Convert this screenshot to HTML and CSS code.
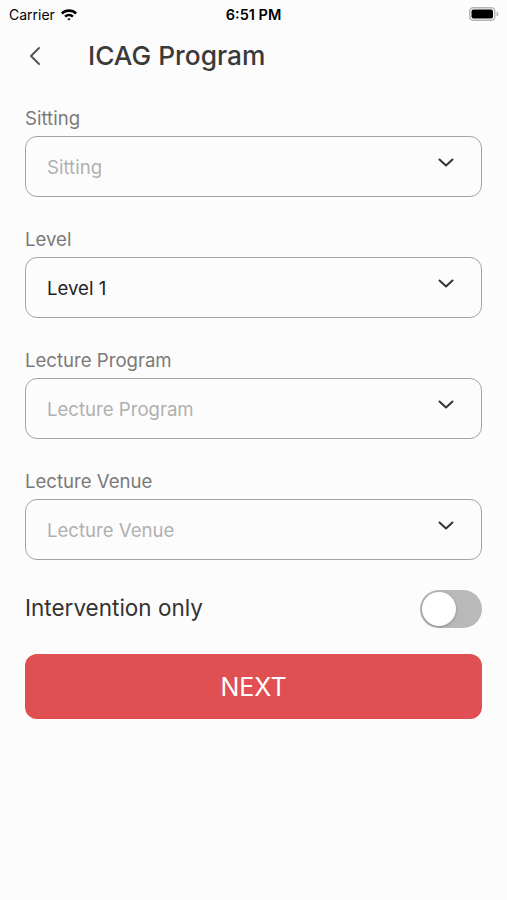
FILE: index.html
```html
<!DOCTYPE html>
<html>
<head>
    <meta charset="UTF-8">
    <title>ICAG Program</title>
    <link rel="stylesheet" href="styles.css">
</head>
<body>
    <div class="statusbar">
        <div class="carrier">Carrier
            <svg class="wifi" width="18" height="13" viewBox="0 0 18 13">
                <path d="M1 4.6 A11.5 11.5 0 0 1 17 4.6 L15.2 6.4 A9 9 0 0 0 2.8 6.4 Z" fill="#000"/>
                <path d="M4.2 7.8 A6.8 6.8 0 0 1 13.8 7.8 L12 9.6 A4.2 4.2 0 0 0 6 9.6 Z" fill="#000"/>
                <path d="M7.4 11 A2.3 2.3 0 0 1 10.6 11 L9 12.6 Z" fill="#000"/>
            </svg>
        </div>
        <div class="time">6:51 PM</div>
        <div class="battery">
            <svg width="30" height="14" viewBox="0 0 30 14">
                <rect x="0.75" y="0.75" width="25" height="12.5" rx="3.5" fill="none" stroke="#b5b5b5" stroke-width="1.5"/>
                <rect x="2.5" y="2.5" width="21.5" height="9" rx="2" fill="#000"/>
                <path d="M27.5 4.5 Q29.5 5 29.5 7 Q29.5 9 27.5 9.5 Z" fill="#b5b5b5"/>
            </svg>
        </div>
    </div>

    <div class="navbar">
        <svg class="back" width="12" height="20" viewBox="0 0 12 20">
            <path d="M10 2 L2 10 L10 18" fill="none" stroke="#555" stroke-width="2" stroke-linecap="round" stroke-linejoin="round"/>
        </svg>
        <div class="title">ICAG Program</div>
    </div>

    <div class="form">
        <div class="field">
            <div class="label">Sitting</div>
            <div class="select">
                <span class="placeholder">Sitting</span>
                <svg class="chevron" width="16" height="9" viewBox="0 0 16 9"><path d="M1.5 1.5 L8 7.5 L14.5 1.5" fill="none" stroke="#333" stroke-width="2" stroke-linecap="round" stroke-linejoin="round"/></svg>
            </div>
        </div>
        <div class="field">
            <div class="label">Level</div>
            <div class="select">
                <span class="value">Level 1</span>
                <svg class="chevron" width="16" height="9" viewBox="0 0 16 9"><path d="M1.5 1.5 L8 7.5 L14.5 1.5" fill="none" stroke="#333" stroke-width="2" stroke-linecap="round" stroke-linejoin="round"/></svg>
            </div>
        </div>
        <div class="field">
            <div class="label">Lecture Program</div>
            <div class="select">
                <span class="placeholder">Lecture Program</span>
                <svg class="chevron" width="16" height="9" viewBox="0 0 16 9"><path d="M1.5 1.5 L8 7.5 L14.5 1.5" fill="none" stroke="#333" stroke-width="2" stroke-linecap="round" stroke-linejoin="round"/></svg>
            </div>
        </div>
        <div class="field">
            <div class="label">Lecture Venue</div>
            <div class="select">
                <span class="placeholder">Lecture Venue</span>
                <svg class="chevron" width="16" height="9" viewBox="0 0 16 9"><path d="M1.5 1.5 L8 7.5 L14.5 1.5" fill="none" stroke="#333" stroke-width="2" stroke-linecap="round" stroke-linejoin="round"/></svg>
            </div>
        </div>

        <div class="switch-row">
            <span class="switch-label">Intervention only</span>
            <div class="switch"><div class="knob"></div></div>
        </div>

        <div class="button">NEXT</div>
    </div>
</body>
</html>
```

FILE: styles.css
```css
body {
    margin: 0;
    background-color: #fcfcfc;
    font-family: Inter, 'Liberation Sans', sans-serif;
    color: #333333;
}

.statusbar {
    height: 28px;
    display: flex;
    align-items: center;
    justify-content: space-between;
    padding: 0 8px 0 9px;
    position: relative;
}

.carrier {
    font-size: 14px;
    color: #000;
    display: flex;
    align-items: center;
    gap: 5px;
}

.time {
    position: absolute;
    left: 0;
    right: 0;
    text-align: center;
    font-size: 14.5px;
    font-weight: 600;
    color: #000;
}

.battery {
    display: flex;
    align-items: center;
}

.navbar {
    height: 55px;
    display: flex;
    align-items: center;
    padding-left: 29px;
}

.back {
    margin-right: 47px;
}

.title {
    font-size: 26.3px;
    font-weight: 500;
    color: #3a3a3a;
}

.form {
    padding: 24px 25px 0 25px;
}

.field {
    margin-bottom: 31px;
}

.label {
    font-size: 18.6px;
    line-height: 22px;
    color: #7a7a7a;
    margin-bottom: 7px;
}

.select {
    height: 59px;
    border: 1px solid #a3a3a3;
    border-radius: 12px;
    display: flex;
    align-items: center;
    justify-content: space-between;
    padding: 0 27px 0 21px;
}

.placeholder {
    font-size: 18.6px;
    color: #b0b0b0;
}

.value {
    font-size: 18.6px;
    color: #222222;
}

.chevron {
    margin-top: -8px;
}

.switch-row {
    display: flex;
    align-items: center;
    justify-content: space-between;
    margin-top: -1px;
}

.switch-label {
    font-size: 22.5px;
    color: #333333;
    margin-bottom: 4px;
}

.switch {
    width: 62px;
    height: 38px;
    border-radius: 19px;
    background-color: #b9b9b9;
    position: relative;
}

.knob {
    position: absolute;
    left: 2px;
    top: 2px;
    width: 34px;
    height: 34px;
    border-radius: 50%;
    background-color: #ffffff;
    box-shadow: 0 1px 3px rgba(0, 0, 0, 0.25);
}

.button {
    margin-top: 26px;
    height: 65px;
    border-radius: 12px;
    background-color: #e04f52;
    color: #ffffff;
    font-size: 25px;
    display: flex;
    align-items: center;
    justify-content: center;
}
```
